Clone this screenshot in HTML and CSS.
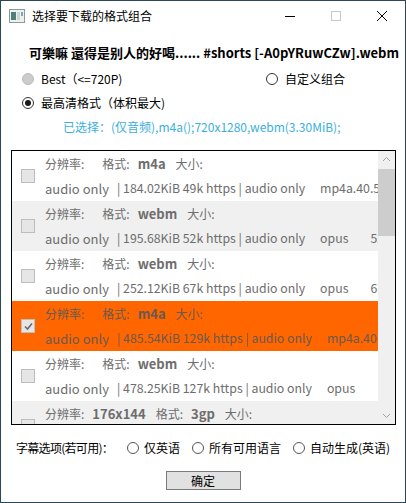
FILE: index.html
```html
<!DOCTYPE html>
<html>
<head>
<meta charset="utf-8">
<link rel="stylesheet" href="styles.css">
</head>
<body>
<div class="window">
  <div class="titlebar">
    <svg class="appicon" width="16" height="14" viewBox="0 0 16 14">
      <rect x="0.5" y="0.5" width="15" height="13" fill="#eef0f0" stroke="#8a9a9a"/>
      <rect x="2" y="3" width="5" height="8" fill="#4f7f7a"/>
      <rect x="8" y="3" width="3" height="8" fill="#c9d6d4"/>
      <rect x="12" y="3" width="2" height="4" fill="#7aa6b8"/>
    </svg>
    <span class="title">选择要下载的格式组合</span>
    <div class="controls">
      <svg class="ctl" width="46" height="30" viewBox="0 0 46 30"><line x1="18" y1="15.5" x2="28" y2="15.5" stroke="#000" stroke-width="1"/></svg>
      <svg class="ctl" width="46" height="30" viewBox="0 0 46 30"><rect x="18.5" y="10.5" width="9" height="9" fill="none" stroke="#c8c8c8" stroke-width="1"/></svg>
      <svg class="ctl" width="46" height="30" viewBox="0 0 46 30"><path d="M18 10 L28 20 M28 10 L18 20" stroke="#000" stroke-width="1"/></svg>
    </div>
  </div>

  <div class="filename">可樂嘛 還得是别人的好喝...... #shorts [-A0pYRuwCZw].webm</div>

  <div class="optrow first">
    <label class="opt best"><span class="radio disabled"></span>Best（&lt;=720P)</label>
    <label class="opt custom"><span class="radio"></span>自定义组合</label>
  </div>
  <div class="optrow">
    <label class="opt"><span class="radio checked"></span>最高清格式（体积最大)</label>
  </div>
  <div class="selected">已选择：(仅音频),m4a();720x1280,webm(3.30MiB);</div>

  <div class="listbox">
    <div class="rows">
      <div class="row">
        <span class="check"></span>
        <div class="lines">
          <div class="l1"><span class="lbl">分辨率:</span><b class="val"></b><span class="lbl">格式:</span><b class="val">m4a</b><span class="lbl">大小:</span></div>
          <div class="l2"><span class="c1">audio only</span><span>| 184.02KiB 49k https | audio only</span><span class="c3">mp4a.40.5</span></div>
        </div>
      </div>
      <div class="row alt">
        <span class="check"></span>
        <div class="lines">
          <div class="l1"><span class="lbl">分辨率:</span><b class="val"></b><span class="lbl">格式:</span><b class="val">webm</b><span class="lbl">大小:</span></div>
          <div class="l2"><span class="c1">audio only</span><span>| 195.68KiB 52k https | audio only</span><span class="c3">opus</span><span class="c4">52k</span></div>
        </div>
      </div>
      <div class="row">
        <span class="check"></span>
        <div class="lines">
          <div class="l1"><span class="lbl">分辨率:</span><b class="val"></b><span class="lbl">格式:</span><b class="val">webm</b><span class="lbl">大小:</span></div>
          <div class="l2"><span class="c1">audio only</span><span>| 252.12KiB 67k https | audio only</span><span class="c3">opus</span><span class="c4">67k</span></div>
        </div>
      </div>
      <div class="row sel">
        <span class="check on"><svg width="11" height="11" viewBox="0 0 11 11"><path d="M2 5.5 L4.5 8 L9 2.5" fill="none" stroke="#6a6a6a" stroke-width="1.6"/></svg></span>
        <div class="lines">
          <div class="l1"><span class="lbl">分辨率:</span><b class="val"></b><span class="lbl">格式:</span><b class="val">m4a</b><span class="lbl">大小:</span></div>
          <div class="l2"><span class="c1">audio only</span><span>| 485.54KiB 129k https | audio only</span><span class="c3">mp4a.40.2</span></div>
        </div>
      </div>
      <div class="row">
        <span class="check"></span>
        <div class="lines">
          <div class="l1"><span class="lbl">分辨率:</span><b class="val"></b><span class="lbl">格式:</span><b class="val">webm</b><span class="lbl">大小:</span></div>
          <div class="l2"><span class="c1">audio only</span><span>| 478.25KiB 127k https | audio only</span><span class="c3">opus</span><span class="c4">127k</span></div>
        </div>
      </div>
      <div class="row alt">
        <span class="check"></span>
        <div class="lines">
          <div class="l1"><span class="lbl">分辨率:</span><b class="val">176x144</b><span class="lbl">格式:</span><b class="val">3gp</b><span class="lbl">大小:</span></div>
          <div class="l2"><span class="c1">176x144</span><span>| 3gp</span></div>
        </div>
      </div>
    </div>
    <div class="scrollbar">
      <div class="arrow"><svg width="17" height="17" viewBox="0 0 17 17"><path d="M5 10 L8.5 6.5 L12 10" fill="none" stroke="#a0a0a0" stroke-width="1"/></svg></div>
      <div class="thumb"></div>
      <div class="track"></div>
      <div class="arrow"><svg width="17" height="17" viewBox="0 0 17 17"><path d="M5 7 L8.5 10.5 L12 7" fill="none" stroke="#a0a0a0" stroke-width="1"/></svg></div>
    </div>
  </div>

  <div class="subs">
    <span class="subslbl">字幕选项(若可用)：</span>
    <label class="opt s1"><span class="radio"></span>仅英语</label>
    <label class="opt s2"><span class="radio"></span>所有可用语言</label>
    <label class="opt s3"><span class="radio"></span>自动生成(英语)</label>
  </div>

  <div class="btnrow"><button class="ok">确定</button></div>
</div>
</body>
</html>
```

FILE: styles.css
```css
* { box-sizing: border-box; }
html, body { margin: 0; padding: 0; }
body {
  width: 406px;
  height: 503px;
  overflow: hidden;
  background: #fff;
  font-family: "Noto Sans CJK SC", "Microsoft YaHei", sans-serif;
  font-size: 12px;
  color: #000;
}
.window {
  width: 406px;
  height: 503px;
  border: 1px solid #2b4656;
  background: #fff;
}
.titlebar {
  height: 30px;
  display: flex;
  align-items: center;
}
.appicon { margin-left: 8px; margin-right: 7px; }
.title { font-size: 12px; line-height: 30px; }
.controls { margin-left: auto; display: flex; }
.ctl { display: block; }

.filename {
  margin-top: 12px;
  padding-left: 28px;
  font-size: 13px;
  font-weight: bold;
  line-height: 20px;
  white-space: nowrap;
}
.optrow {
  display: flex;
  height: 24px;
  align-items: center;
}
.optrow.first { margin-top: 4px; }
.opt {
  display: inline-flex;
  align-items: center;
  font-size: 12px;
  line-height: 24px;
  white-space: nowrap;
}
.optrow .opt { margin-left: 21px; }
.optrow .custom { margin-left: auto; margin-right: 60px; }
.radio {
  width: 12px;
  height: 12px;
  border-radius: 50%;
  border: 1px solid #333;
  background: #fff;
  margin-right: 7px;
  display: inline-flex;
  align-items: center;
  justify-content: center;
  flex: none;
}
.radio.disabled { border-color: #bcbcbc; background: #cccccc; }
.radio.checked::after {
  content: "";
  width: 6px;
  height: 6px;
  border-radius: 50%;
  background: #1a1a1a;
}
.selected {
  padding-left: 62px;
  font-size: 12px;
  line-height: 24px;
  color: #3aafe0;
  white-space: nowrap;
}
.listbox {
  margin: 11px 0 0 10px;
  width: 385px;
  height: 275px;
  border: 1px solid #000;
  display: flex;
  overflow: hidden;
}
.rows {
  width: 366px;
  overflow: hidden;
  flex: none;
}
.row {
  height: 50px;
  display: flex;
  align-items: center;
  background: #fff;
  color: #6d6d6d;
  font-size: 12px;
  white-space: nowrap;
}
.row.alt { background: #f0f0f0; }
.row.sel { background: #ff6600; color: #6a5a50; }
.check {
  width: 14px;
  height: 14px;
  margin-left: 9px;
  margin-right: 10px;
  background: #e6e6e6;
  border: 1px solid #bdbdbd;
  flex: none;
  display: flex;
  align-items: center;
  justify-content: center;
}
.lines { display: flex; flex-direction: column; }
.l1, .l2 { line-height: 25px; height: 25px; display: flex; }
.l1 b { font-size: 13px; }
.val { margin: 0 10px 0 8px; font-weight: bold; }
.l2 { font-size: 12.3px; }
.c1 { width: 72px; flex: none; font-size: 13px; }
.c3 { margin-left: 15px; }
.c4 { margin-left: 22px; }

.scrollbar {
  width: 17px;
  flex: none;
  background: #f0f0f0;
  display: flex;
  flex-direction: column;
}
.arrow { height: 17px; flex: none; }
.arrow svg { display: block; }
.thumb { height: 67px; background: #cdcdcd; margin-top: 1px; flex: none; }
.track { flex: 1; }

.subs {
  display: flex;
  align-items: center;
  margin-top: 11px;
  padding-left: 15px;
  font-size: 12px;
  line-height: 20px;
  white-space: nowrap;
}
.subslbl { width: 111px; flex: none; letter-spacing: -0.7px; overflow: hidden; }
.subs .radio { border-color: #555; margin-right: 5px; }
.subs .s1 { width: 65px; }
.subs .s2 { width: 101px; }

.btnrow { display: flex; justify-content: center; margin-top: 11px; }
.ok {
  width: 75px;
  height: 19px;
  padding: 0;
  background: #e1e1e1;
  border: 1px solid #7a7a7a;
  border-radius: 0;
  font-family: "Noto Sans CJK SC", sans-serif;
  font-size: 12px;
  line-height: 17px;
  color: #000;
}
```
